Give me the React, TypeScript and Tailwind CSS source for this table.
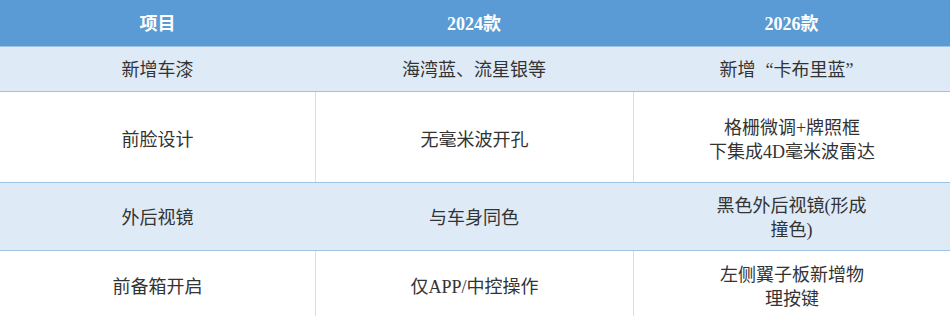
import React from "react";

type Row = {
  cells: React.ReactNode[][];
  shaded: boolean;
  height: string;
  pad: string;
};

const Quote: React.FC<{ side: "open" | "close" }> = ({ side }) =>
  side === "open" ? (
    <span className="inline-block w-[18px] text-right">“</span>
  ) : (
    <span className="inline-block w-[18px] text-left">”</span>
  );

const ROWS: Row[] = [
  {
    cells: [
      ["新增车漆"],
      ["海湾蓝、流星银等"],
      [
        <>
          新增
          <Quote side="open" />
          卡布里蓝
          <Quote side="close" />
        </>,
      ],
    ],
    shaded: true,
    height: "h-[46px]",
    pad: "pt-[1px]",
  },
  {
    cells: [["前脸设计"], ["无毫米波开孔"], ["格栅微调+牌照框", "下集成4D毫米波雷达"]],
    shaded: false,
    height: "h-[90px]",
    pad: "pt-[5px]",
  },
  {
    cells: [["外后视镜"], ["与车身同色"], ["黑色外后视镜(形成", "撞色)"]],
    shaded: true,
    height: "h-[69px]",
    pad: "pt-[3px]",
  },
  {
    cells: [["前备箱开启"], ["仅APP/中控操作"], ["左侧翼子板新增物", "理按键"]],
    shaded: false,
    height: "h-[68px]",
    pad: "pt-[3px]",
  },
];

const HEADERS = ["项目", "2024款", "2026款"];

const App: React.FC = () => {
  return (
    <div
      className="w-[950px] h-[316px] overflow-hidden bg-white text-[18px] text-[#333333]"
      style={{ fontFamily: '"Liberation Serif", "Noto Sans CJK SC", serif' }}
    >
      {/* Header */}
      <div className="grid grid-cols-[315px_318px_317px] h-[46px] bg-[#5b9bd5] text-white font-bold">
        {HEADERS.map((h) => (
          <div key={h} className="flex items-center justify-center pt-[3px]">
            {h}
          </div>
        ))}
      </div>

      {/* Body */}
      {ROWS.map((row, i) => (
        <div
          key={i}
          className={
            row.shaded
              ? `grid grid-cols-[315px_318px_317px] ${row.height} bg-[#deeaf6] border-t border-b border-[#9dc3e6]`
              : `grid grid-cols-[315px_318px_317px] ${row.height} bg-white`
          }
        >
          {row.cells.map((lines, j) => (
            <div
              key={j}
              className={
                !row.shaded && j > 0
                  ? `flex flex-col items-center justify-center leading-[24px] border-l border-[#dddddd] ${row.pad}`
                  : `flex flex-col items-center justify-center leading-[24px] ${row.pad}`
              }
            >
              {lines.map((l, k) => (
                <span key={k}>{l}</span>
              ))}
            </div>
          ))}
        </div>
      ))}
    </div>
  );
};

export default App;
